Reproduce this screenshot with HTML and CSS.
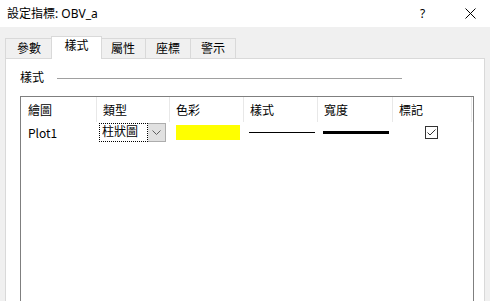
FILE: index.html
```html
<!DOCTYPE html>
<html lang="zh-Hant">
<head>
  <meta charset="UTF-8">
  <title>設定指標: OBV_a</title>
  <link rel="stylesheet" href="styles.css">
</head>
<body>
  <div class="titlebar">
    <span class="title">設定指標: OBV_a</span>
    <span class="help">?</span>
    <span class="close">
      <svg width="11" height="11" viewBox="0 0 11 11"><path d="M0.5 0.5 L10.5 10.5 M10.5 0.5 L0.5 10.5" stroke="#000" stroke-width="1" fill="none"/></svg>
    </span>
  </div>

  <div class="tabs">
    <div class="tab">參數</div>
    <div class="tab active">樣式</div>
    <div class="tab">屬性</div>
    <div class="tab">座標</div>
    <div class="tab">警示</div>
  </div>

  <div class="panel">
    <div class="group-title">
      <span>樣式</span>
      <div class="group-line"></div>
    </div>

    <div class="grid-box">
      <div class="row header">
        <div class="cell">繪圖</div>
        <div class="cell">類型</div>
        <div class="cell">色彩</div>
        <div class="cell">樣式</div>
        <div class="cell">寬度</div>
        <div class="cell">標記</div>
      </div>
      <div class="row data">
        <div class="cell plot-name">Plot1</div>
        <div class="cell">
          <div class="combo">
            <span class="combo-text">柱狀圖</span>
            <span class="combo-btn">
              <svg width="9" height="5" viewBox="0 0 9 5"><path d="M0.5 0.5 L4.5 4.5 L8.5 0.5" stroke="#606060" fill="none"/></svg>
            </span>
          </div>
        </div>
        <div class="cell"><div class="swatch"></div></div>
        <div class="cell"><div class="line thin"></div></div>
        <div class="cell"><div class="line thick"></div></div>
        <div class="cell">
          <div class="checkbox">
            <svg width="11" height="11" viewBox="0 0 11 11"><path d="M1.5 5.5 L4 8 L9.5 2.5" stroke="#333" stroke-width="1" fill="none"/></svg>
          </div>
        </div>
      </div>
    </div>
  </div>
</body>
</html>
```

FILE: styles.css
```css
body {
  margin: 0;
  padding: 0;
  height: 100vh;
  overflow: hidden;
  background-color: #f0f0f0;
  font-family: "Noto Sans", "Noto Sans CJK TC", sans-serif;
  font-size: 12px;
  color: #000;
  display: flex;
  flex-direction: column;
}

.titlebar {
  flex-shrink: 0;
  height: 27px;
  background-color: #ffffff;
  display: flex;
  align-items: center;
  padding-left: 7px;
}

.title {
  flex-grow: 1;
  line-height: 14px;
}

.help {
  width: 8px;
  margin-right: 37px;
  font-size: 12px;
}

.close {
  width: 11px;
  height: 11px;
  margin-right: 14px;
  display: flex;
}

.tabs {
  flex-shrink: 0;
  height: 31px;
  display: flex;
  align-items: flex-end;
  padding-left: 5px;
}

.tab {
  width: 46px;
  height: 20px;
  border: 1px solid #d9d9d9;
  border-bottom: none;
  margin-right: -1px;
  box-sizing: border-box;
  display: flex;
  align-items: center;
  justify-content: center;
  background-color: #f0f0f0;
  line-height: 14px;
}

.tab:first-child {
  width: 48px;
}

.tab.active {
  width: 51px;
  height: 23px;
  margin-bottom: -1px;
  margin-left: -1px;
  margin-right: -2px;
  background-color: #ffffff;
  position: relative;
  z-index: 1;
  align-items: flex-start;
  padding-top: 2px;
}

.panel {
  flex-grow: 1;
  min-height: 0;
  overflow: hidden;
  margin: 0 5px 0 5px;
  background-color: #ffffff;
  border: 1px solid #d9d9d9;
  border-bottom: none;
  padding: 12px 10px 0 14px;
}

.group-title {
  display: flex;
  align-items: center;
  height: 14px;
  line-height: 14px;
}

.group-line {
  width: 345px;
  height: 1px;
  margin-left: 13px;
  background-color: #a0a0a0;
}

.grid-box {
  margin-top: 11px;
  width: 454px;
  height: 300px;
  box-sizing: border-box;
  border: 1px solid #7f7f7f;
  background-color: #ffffff;
}

.row {
  display: grid;
  grid-template-columns: 76px 73px 74px 74px 75px 1fr;
}

.row.header {
  height: 25px;
}

.row.header .cell {
  border-right: 1px solid #e8e8e8;
  padding-left: 6px;
  display: flex;
  align-items: center;
}

.row.header .cell:first-child,
.row.data .cell:first-child {
  padding-left: 7px;
}

.row.header .cell:last-child {
  margin-right: 1px;
}

.row.data {
  height: 21px;
}

.row.data .cell {
  display: flex;
  align-items: center;
}

.plot-name {
  font-family: "Noto Sans CJK TC", sans-serif;
}

.combo {
  display: flex;
  margin-left: 2px;
  height: 19px;
}

.combo-text {
  width: 49px;
  box-sizing: border-box;
  border: 1px dotted #000;
  padding-left: 2px;
  line-height: 16px;
}

.combo-btn {
  width: 18px;
  box-sizing: border-box;
  border: 1px solid #adadad;
  border-left: none;
  background-color: #e1e1e1;
  display: flex;
  align-items: center;
  justify-content: center;
}

.swatch {
  width: 64px;
  height: 15px;
  margin-left: 6px;
  background-color: #ffff00;
}

.line {
  width: 66px;
  margin-left: 5px;
  background-color: #000;
}

.line.thin {
  height: 1px;
}

.line.thick {
  height: 3px;
}

.checkbox {
  width: 13px;
  height: 13px;
  box-sizing: border-box;
  border: 1px solid #333;
  margin-left: 32px;
  display: flex;
  align-items: center;
  justify-content: center;
}
```
